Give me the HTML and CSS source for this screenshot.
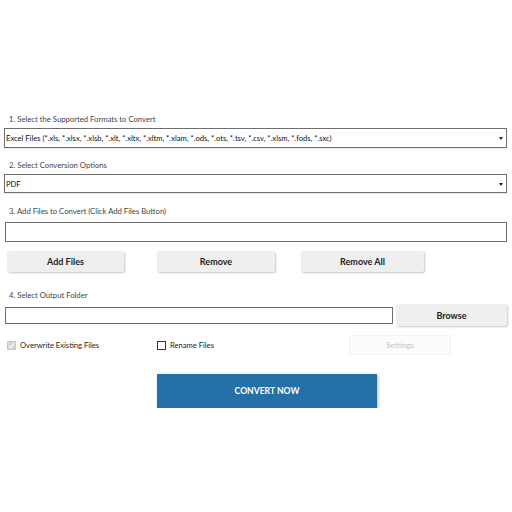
FILE: index.html
```html
<!DOCTYPE html>
<html lang="en">
<head>
  <meta charset="UTF-8">
  <title>Excel Converter</title>
  <link rel="stylesheet" href="styles.css">
</head>
<body>
  <div class="app">
    <div class="step">1. Select the Supported Formats to Convert</div>
    <div class="select-box">
      <span class="select-text">Excel Files (*.xls, *.xlsx, *.xlsb, *.xlt, *.xltx, *.xltm, *.xlam, *.ods, *.ots, *.tsv, *.csv, *.xlsm, *.fods, *.sxc)</span>
      <span class="arrow"></span>
    </div>

    <div class="step step-2">2. Select Conversion Options</div>
    <div class="select-box select-short">
      <span class="select-text">PDF</span>
      <span class="arrow"></span>
    </div>

    <div class="step step-3">3. Add Files to Convert (Click Add Files Button)</div>
    <div class="file-list"></div>

    <div class="btn-row">
      <button class="btn btn-add">Add Files</button>
      <button class="btn btn-remove">Remove</button>
      <button class="btn btn-remove-all">Remove All</button>
    </div>

    <div class="step step-4">4. Select Output Folder</div>
    <div class="folder-row">
      <div class="folder-input"></div>
      <button class="btn btn-browse">Browse</button>
    </div>

    <div class="options-row">
      <label class="check check-overwrite"><span class="box checked"></span>Overwrite Existing Files</label>
      <label class="check check-rename"><span class="box"></span>Rename Files</label>
      <button class="btn-settings" disabled>Settings</button>
    </div>

    <button class="btn-convert">CONVERT NOW</button>
  </div>
</body>
</html>
```

FILE: styles.css
```css
* {
  box-sizing: border-box;
  font-family: Lato, 'Open Sans', sans-serif;
}

body {
  margin: 0;
  padding: 0;
  background: #fff;
  color: #333;
}

.app {
  padding: 113px 5px 0 4px;
}

.step {
  font-size: 7.7px;
  line-height: 12px;
  color: #444;
  margin: 0 0 3px 5px;
}

.step-2 {
  margin-top: 11px;
}

.step-3 {
  margin-top: 12px;
  margin-bottom: 5px;
}

.step-4 {
  margin-top: 17px;
}

.select-box {
  position: relative;
  height: 20px;
  border: 1px solid #6e6e6e;
  background: #fff;
  display: flex;
  align-items: center;
  padding-left: 1px;
  box-shadow: 0 1px 1px rgba(0,0,0,0.08);
}

.select-short {
  height: 19px;
}

.select-text {
  font-size: 7.6px;
  color: #111;
  white-space: nowrap;
}

.arrow {
  position: absolute;
  right: 3px;
  top: 50%;
  margin-top: -1px;
  border-left: 2.5px solid transparent;
  border-right: 2.5px solid transparent;
  border-top: 3px solid #222;
}

.file-list {
  height: 20px;
  margin-left: 1px;
  border: 1px solid #6e6e6e;
}

.btn-row {
  display: flex;
  margin-top: 9px;
  padding-left: 3px;
}

.btn {
  height: 21px;
  border: none;
  border-radius: 2px;
  background: #efefef;
  color: #222;
  font-size: 9px;
  font-weight: 700;
  box-shadow: 1px 1px 2px rgba(0,0,0,0.22);
  cursor: pointer;
}

.btn-add {
  width: 117px;
}

.btn-remove {
  width: 118px;
  margin-left: 33px;
}

.btn-remove-all {
  width: 123px;
  margin-left: 26px;
}

.folder-row {
  display: flex;
  align-items: center;
  height: 22px;
  padding-left: 1px;
}

.folder-input {
  width: 388px;
  height: 17px;
  border: 1px solid #6e6e6e;
}

.btn-browse {
  width: 111px;
  height: 22px;
  margin-left: 3px;
}

.options-row {
  display: flex;
  align-items: center;
  margin-top: 9px;
  height: 20px;
}

.check {
  display: flex;
  align-items: center;
  font-size: 7.6px;
  color: #222;
}

.check-overwrite {
  width: 153px;
  padding-left: 3px;
}

.check-rename {
  width: 192px;
}

.box {
  width: 9px;
  height: 9px;
  border: 1px solid #333;
  background: #fff;
  margin-right: 4px;
  position: relative;
}

.box.checked {
  border-color: #c8c8c8;
  background: #d6d6d6;
}

.box.checked::after {
  content: "";
  position: absolute;
  left: 2px;
  top: 0;
  width: 2px;
  height: 5px;
  border-right: 1.3px solid #fff;
  border-bottom: 1.3px solid #fff;
  transform: rotate(40deg);
}

.btn-settings {
  width: 102px;
  height: 20px;
  border: 1px solid #f2f2f2;
  border-radius: 2px;
  background: #fcfcfc;
  color: #c4c4c4;
  font-size: 8px;
}

.btn-convert {
  display: block;
  width: 220px;
  height: 34px;
  margin: 19px 0 0 153px;
  border: none;
  background: #2470a7;
  color: #fff;
  font-size: 8.6px;
  font-weight: 700;
  box-shadow: 1px 1px 3px rgba(0,0,0,0.3);
}
```
